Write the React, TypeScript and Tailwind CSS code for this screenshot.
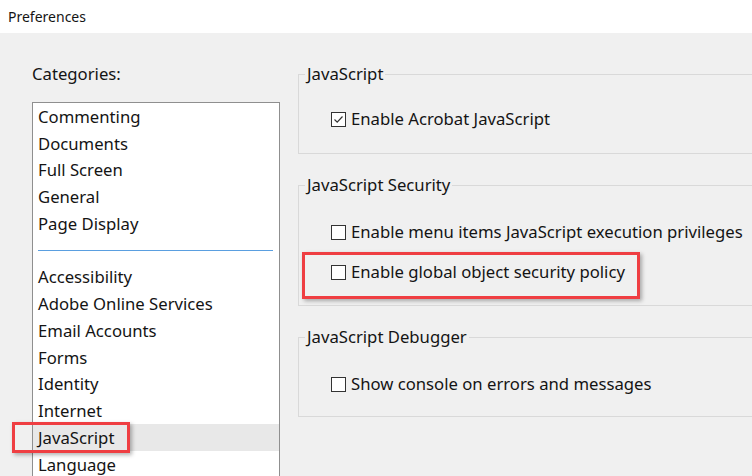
const categoriesTop = [
  "Commenting",
  "Documents",
  "Full Screen",
  "General",
  "Page Display",
];

const categoriesBottom = [
  "Accessibility",
  "Adobe Online Services",
  "Email Accounts",
  "Forms",
  "Identity",
  "Internet",
  "JavaScript",
  "Language",
];

function Checkbox({ checked = false }: { checked?: boolean }) {
  return (
    <span className="flex h-[15px] w-[15px] shrink-0 items-center justify-center border border-[#333333] bg-white">
      {checked && (
        <svg width="11" height="11" viewBox="0 0 11 11" fill="none">
          <path d="M1.5 5.5 L4.2 8.2 L9.5 2.5" stroke="#333333" strokeWidth="1.2" />
        </svg>
      )}
    </span>
  );
}

function Option({ label, checked }: { label: string; checked?: boolean }) {
  return (
    <label className="flex h-5 items-center gap-[5px] pl-8">
      <Checkbox checked={checked} />
      <span>{label}</span>
    </label>
  );
}

function Group({
  title,
  className,
  children,
}: {
  title: string;
  className?: string;
  children: React.ReactNode;
}) {
  return (
    <fieldset className={"border border-[#d9d9d9] " + (className ?? "")}>
      <legend className="ml-[6px] h-5 px-[2px] leading-5">{title}</legend>
      {children}
    </fieldset>
  );
}

export default function App() {
  return (
    <div
      className="relative h-[476px] w-[752px] overflow-hidden bg-[#f0f0f0] text-[16.7px] text-[#141414]"
      style={{ fontFamily: '"Noto Sans", "Open Sans", sans-serif' }}
    >
      <div className="flex h-[33px] items-center bg-white pl-2 text-[14px]">Preferences</div>

      <div className="flex">
        {/* categories */}
        <div className="w-[298px] shrink-0 pl-8">
          <div className="mt-[31px] h-5 leading-5">Categories:</div>
          <div className="mt-[18px] w-[248px] border border-[#8f8f8f] bg-white">
            {categoriesTop.map((c) => (
              <div key={c} className="flex h-[26.75px] items-center pl-[5px]">
                {c}
              </div>
            ))}
            <div className="flex h-[26.75px] items-center pl-[5px] pr-[6px]">
              <div className="h-px w-full bg-[#5a9fe0]" />
            </div>
            {categoriesBottom.map((c) => (
              <div
                key={c}
                className={
                  "flex h-[26.75px] items-center pl-[5px] " +
                  (c === "JavaScript" ? "bg-[#e8e8e8]" : "")
                }
              >
                {c}
              </div>
            ))}
          </div>
        </div>

        {/* settings */}
        <div className="w-[480px] shrink-0">
          <Group title="JavaScript" className="mt-[31px] pb-[24px] pt-[25px]">
            <Option label="Enable Acrobat JavaScript" checked />
          </Group>
          <Group title="JavaScript Security" className="mt-[21px] pb-[23px] pt-[27px]">
            <div className="flex flex-col gap-5">
              <Option label="Enable menu items JavaScript execution privileges" />
              <Option label="Enable global object security policy" />
            </div>
          </Group>
          <Group title="JavaScript Debugger" className="mt-[21px] pb-[22px] pt-[27px]">
            <Option label="Show console on errors and messages" />
          </Group>
        </div>
      </div>

      {/* annotation highlights */}
      <div className="pointer-events-none absolute left-[12px] top-[422px] h-[31px] w-[118px] border-[3px] border-[#ef3e42] shadow-[2px_2px_4px_rgba(0,0,0,0.3)]" />
      <div className="pointer-events-none absolute left-[302px] top-[252px] h-[47px] w-[338px] border-[3px] border-[#ef3e42] shadow-[2px_2px_4px_rgba(0,0,0,0.3)]" />
    </div>
  );
}
